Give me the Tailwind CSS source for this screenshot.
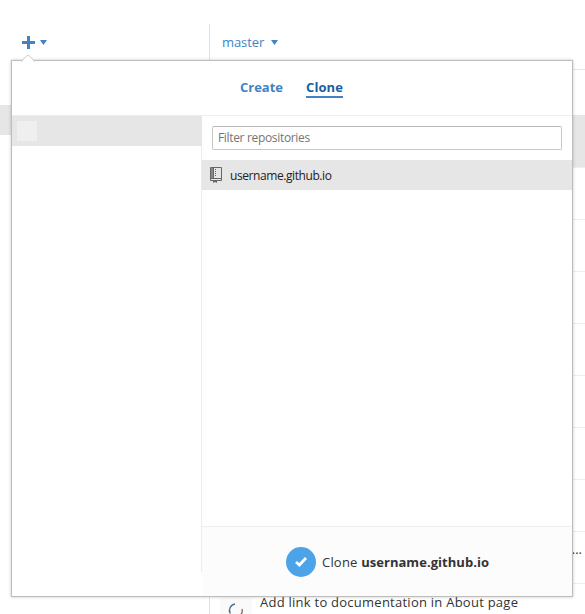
<!DOCTYPE html>
<html lang="en">
<head>
<meta charset="utf-8">
<title>Clone repository</title>
<script src="https://cdn.jsdelivr.net/npm/@tailwindcss/browser@4"></script>
</head>
<body class="relative h-[614px] w-[585px] overflow-hidden bg-white font-['Open_Sans','Noto_Sans',sans-serif] text-[#333]">
<div class="flex h-full">
  <aside class="w-[210px] shrink-0 pt-6">
    <div class="flex h-full flex-col border-r border-[#e3e3e3]">
      <div class="flex h-[81px] items-start pt-3 pl-[22px] text-[#4183c4]">
        <svg class="h-[13px] w-[13px]" viewBox="0 0 13 13" fill="currentColor"><path d="M5 0h3v5h5v3H8v5H5V8H0V5h5z"/></svg>
        <svg class="mt-1 ml-[5px] h-[5px] w-[7px]" viewBox="0 0 7 5" fill="currentColor"><path d="M0 0h7L3.5 5z"/></svg>
      </div>
      <div class="h-[30px] bg-[#e6e6e6]"></div>
    </div>
  </aside>
  <main class="min-w-0 flex-1">
    <div class="flex h-[70px] items-start border-b border-[#e5e5e5] pt-8 pl-3 text-[#4183c4]">
      <span class="w-[43px] text-[13px] leading-5 tracking-[-0.1px]">master</span>
      <svg class="mt-2 ml-[6px] h-[5px] w-[7px]" viewBox="0 0 7 5" fill="currentColor"><path d="M0 0h7L3.5 5z"/></svg>
    </div>
    <div class="h-[45px]"></div>
    <div class="h-[53px] border-b border-[#eee] bg-[#e6e6e6]"></div>
    <div class="h-[52px] border-b border-[#eee]"></div>
    <div class="h-[52px] border-b border-[#eee]"></div>
    <div class="h-[52px] border-b border-[#eee]"></div>
    <div class="h-[52px] border-b border-[#eee]"></div>
    <div class="h-[52px] border-b border-[#eee]"></div>
    <div class="h-[52px] border-b border-[#eee]"></div>
    <div class="h-[52px] border-b border-[#eee]"></div>
    <div class="flex h-[52px] justify-end border-b border-[#eee] pt-[7px] pr-[3px] text-[13px] leading-5">...</div>
    <div class="flex h-[52px] pt-2 pl-[10px]">
      <div class="h-8 w-8 shrink-0 bg-[#fafafa]">
        <svg class="h-8 w-8" viewBox="0 0 32 32" fill="none" stroke-width="1.4"><path d="M15 12a6.500 6.500 0 0 0-4.800 9.500" stroke="#4d6f94"/><path d="M22 17a6.500 6.500 0 0 1-1.500 6" stroke="#8b6f6c"/></svg>
      </div>
      <span class="ml-2 text-[13px] leading-5 tracking-[0.25px] whitespace-nowrap">Add link to documentation in About page</span>
    </div>
  </main>
</div>

<section class="absolute top-[60px] left-[11px] flex h-[537px] w-[562px] flex-col border border-[#bdbdbd] bg-white shadow-[0_0_3px_rgba(0,0,0,0.22)]">
  <svg class="absolute -top-[7px] left-[8px] h-[8px] w-4" viewBox="0 0 16 8"><path d="M1 8L8 1l7 7z" fill="#fff"/><path d="M1 7.500L8 .8l7 6.700" fill="none" stroke="#c8c8c8"/></svg>
  <nav class="flex h-[55px] shrink-0 justify-center gap-6 border-b border-[#eee] pt-4 pr-px text-[13px] leading-5 font-bold">
    <span class="w-[42px] text-[#4183c4]">Create</span>
    <span class="h-[21px] w-[37px] border-b-2 border-[#4183c4] tracking-[0.1px] text-[#1a5fa3]">Clone</span>
  </nav>
  <div class="flex min-h-0 flex-1">
    <div class="flex w-[190px] shrink-0 flex-col">
      <div class="flex h-[30px] items-center bg-[#e6e6e6] pl-[5px]"><div class="h-5 w-5 bg-[#efefef]"></div></div>
      <div class="mb-6 flex-1 border-r border-[#ececec]"></div>
    </div>
    <div class="flex flex-1 flex-col bg-white">
      <div class="flex h-[44px] shrink-0 px-[10px] pt-[10px]">
        <div class="h-6 w-full rounded-[2px] border border-[#c6c6c6] border-t-[#b8b8b8] pl-[5px] text-[12px] leading-[22px] tracking-[-0.33px] text-[#757575]">Filter repositories</div>
      </div>
      <div class="flex h-[30px] shrink-0 items-center bg-[#e6e6e6] pl-2">
        <svg class="h-4 w-3" viewBox="0 0 12 16" fill="none" stroke="#666"><path d="M3 13.500H.5V.5h11v13H7M.5 11.500h11M3.500 .5v11"/><path d="M1 1h2v10H1z" fill="#888" stroke="none"/><path d="M5 2.500h1M5 4.500h1M5 6.500h1M5 8.500h1"/><path d="M3 13h4v3l-2-1-2 1z" fill="#666" stroke="none"/></svg>
        <span class="mt-[2px] ml-2 text-[12px] leading-5 tracking-[-0.42px] text-[#222]">username.github.io</span>
      </div>
      <div class="flex-1"></div>
      <div class="flex h-[70px] shrink-0 items-center border-t border-[#eee] bg-[#fcfcfc] pl-[84px]">
        <div class="flex h-[30px] w-[30px] items-center justify-center rounded-full bg-[#4da3e8]">
          <svg class="h-[10px] w-[12px]" viewBox="0 0 12 10" fill="none" stroke="#fff" stroke-width="2.800"><path d="M1 5L4.400 8 11 1"/></svg>
        </div>
        <div class="ml-[6px] text-[13px] leading-5 whitespace-nowrap"><span class="tracking-[0.2px]">Clone </span><b class="font-bold tracking-[0.04px]">username.github.io</b></div>
      </div>
    </div>
  </div>
</section>
</body>
</html>
